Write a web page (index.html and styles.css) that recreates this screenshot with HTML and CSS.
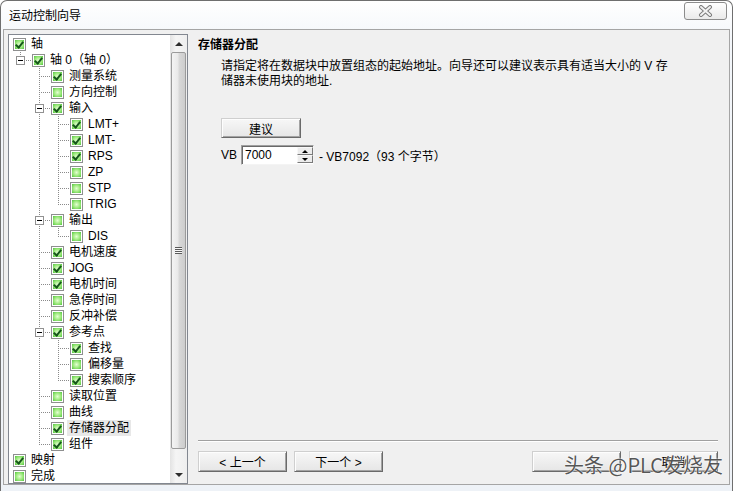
FILE: index.html
```html
<!DOCTYPE html>
<html lang="zh-CN">
<head>
<meta charset="UTF-8">
<title>运动控制向导</title>
<link rel="stylesheet" href="styles.css">
</head>
<body>
<div class="window">
	<div class="titlebar">
		<span class="title">运动控制向导</span>
		<button class="close" type="button">
			<svg width="15" height="12" viewBox="0 0 15 12">
				<path d="M3 2 L12 10 M12 2 L3 10" stroke="#7b7b7b" stroke-width="4" stroke-linecap="round" fill="none"/>
				<path d="M3 2 L12 10 M12 2 L3 10" stroke="#f2f2f2" stroke-width="2" stroke-linecap="round" fill="none"/>
			</svg>
		</button>
	</div>
	<div class="client">
		<div class="tree">
			<ul class="nodes">
				<li class="row"><span class="cb on"></span><span class="lbl">轴</span></li>
				<li class="row"><span class="ind l"><span class="x"></span></span><span class="cb on"></span><span class="lbl">轴 0（轴 0）</span></li>
				<li class="row"><span class="ind"></span><span class="ind t"></span><span class="cb on"></span><span class="lbl">测量系统</span></li>
				<li class="row"><span class="ind"></span><span class="ind t"></span><span class="cb"></span><span class="lbl">方向控制</span></li>
				<li class="row"><span class="ind"></span><span class="ind t"><span class="x"></span></span><span class="cb on"></span><span class="lbl">输入</span></li>
				<li class="row"><span class="ind"></span><span class="ind v"></span><span class="ind t"></span><span class="cb on"></span><span class="lbl">LMT+</span></li>
				<li class="row"><span class="ind"></span><span class="ind v"></span><span class="ind t"></span><span class="cb on"></span><span class="lbl">LMT-</span></li>
				<li class="row"><span class="ind"></span><span class="ind v"></span><span class="ind t"></span><span class="cb on"></span><span class="lbl">RPS</span></li>
				<li class="row"><span class="ind"></span><span class="ind v"></span><span class="ind t"></span><span class="cb"></span><span class="lbl">ZP</span></li>
				<li class="row"><span class="ind"></span><span class="ind v"></span><span class="ind t"></span><span class="cb"></span><span class="lbl">STP</span></li>
				<li class="row"><span class="ind"></span><span class="ind v"></span><span class="ind l"></span><span class="cb"></span><span class="lbl">TRIG</span></li>
				<li class="row"><span class="ind"></span><span class="ind t"><span class="x"></span></span><span class="cb"></span><span class="lbl">输出</span></li>
				<li class="row"><span class="ind"></span><span class="ind v"></span><span class="ind l"></span><span class="cb"></span><span class="lbl">DIS</span></li>
				<li class="row"><span class="ind"></span><span class="ind t"></span><span class="cb on"></span><span class="lbl">电机速度</span></li>
				<li class="row"><span class="ind"></span><span class="ind t"></span><span class="cb on"></span><span class="lbl">JOG</span></li>
				<li class="row"><span class="ind"></span><span class="ind t"></span><span class="cb on"></span><span class="lbl">电机时间</span></li>
				<li class="row"><span class="ind"></span><span class="ind t"></span><span class="cb"></span><span class="lbl">急停时间</span></li>
				<li class="row"><span class="ind"></span><span class="ind t"></span><span class="cb"></span><span class="lbl">反冲补偿</span></li>
				<li class="row"><span class="ind"></span><span class="ind t"><span class="x"></span></span><span class="cb on"></span><span class="lbl">参考点</span></li>
				<li class="row"><span class="ind"></span><span class="ind v"></span><span class="ind t"></span><span class="cb on"></span><span class="lbl">查找</span></li>
				<li class="row"><span class="ind"></span><span class="ind v"></span><span class="ind t"></span><span class="cb"></span><span class="lbl">偏移量</span></li>
				<li class="row"><span class="ind"></span><span class="ind v"></span><span class="ind l"></span><span class="cb on"></span><span class="lbl">搜索顺序</span></li>
				<li class="row"><span class="ind"></span><span class="ind t"></span><span class="cb"></span><span class="lbl">读取位置</span></li>
				<li class="row"><span class="ind"></span><span class="ind t"></span><span class="cb"></span><span class="lbl">曲线</span></li>
				<li class="row"><span class="ind"></span><span class="ind t"></span><span class="cb on"></span><span class="lbl sel">存储器分配</span></li>
				<li class="row"><span class="ind"></span><span class="ind l"></span><span class="cb on"></span><span class="lbl">组件</span></li>
				<li class="row"><span class="cb on"></span><span class="lbl">映射</span></li>
				<li class="row"><span class="cb"></span><span class="lbl">完成</span></li>
			</ul>
			<div class="sbar">
				<div class="sb-btn up"></div>
				<div class="sb-thumb"><span class="grip"></span></div>
				<div class="sb-track"></div>
				<div class="sb-btn down"></div>
			</div>
		</div>
		<div class="page">
			<h2>存储器分配</h2>
			<p class="desc">请指定将在数据块中放置组态的起始地址。向导还可以建议表示具有适当大小的 V 存<br>储器未使用块的地址.</p>
			<button class="btn suggest" type="button">建议</button>
			<div class="vbrow">
				<span>VB</span>
				<div class="spinbox">
					<span class="val">7000</span>
					<span class="spin"><i class="up"></i><i class="down"></i></span>
				</div>
				<span>- VB7092（93 个字节）</span>
			</div>
			<div class="footer">
				<div class="sep"></div>
				<div class="buttons">
					<button class="btn nav" type="button">&lt; 上一个</button>
					<button class="btn nav next" type="button">下一个 &gt;</button>
					<button class="btn nav finish" type="button"></button>
					<button class="btn nav cancel" type="button">取消</button>
				</div>
			</div>
		</div>
	</div>
</div>
<div class="watermark">头条 @PLC发烧友</div>
</body>
</html>
```

FILE: styles.css
```css
body {
	margin: 0;
	background: #fff;
	font-family: "Liberation Sans", "Noto Sans CJK SC", sans-serif;
	font-size: 12px;
	color: #000;
	position: relative;
	overflow: hidden;
	height: 491px;
}

.window {
	width: 733px;
	height: 491px;
	box-sizing: border-box;
	border: 1px solid #6f6f6f;
	border-bottom: none;
	border-radius: 7px 7px 0 0;
	background: linear-gradient(#ffffff, #f3f6fa 40px, #eef2f7);
	padding: 0 2px 6px 2px;
	display: flex;
	flex-direction: column;
}

.titlebar {
	height: 28px;
	display: flex;
	align-items: flex-start;
	padding-left: 6px;
}

.title {
	line-height: 28px;
	font-family: "Noto Sans CJK SC", sans-serif;
	font-size: 12px;
}

.close {
	margin: 1px 3px 0 auto;
	width: 43px;
	height: 18px;
	padding: 0;
	border: 1px solid #8c8c8c;
	border-radius: 3px;
	background: linear-gradient(#ffffff, #eaeaea);
	display: flex;
	align-items: center;
	justify-content: center;
}

.client {
	flex: 1;
	display: flex;
	border: 1px solid #a5a5a5;
	background: #f0f0f0;
	padding: 4px 0 0 4px;
	min-height: 0;
}

/* tree */

.tree {
	width: 180px;
	height: 450px;
	box-sizing: border-box;
	border: 1px solid #828790;
	background: #fff;
	display: flex;
	flex: none;
}

.nodes {
	flex: 1;
	list-style: none;
	margin: 0;
	padding: 1px 0 0 0;
	overflow: hidden;
}

.row {
	display: flex;
	align-items: center;
	height: 16px;
	padding-left: 4px;
	white-space: nowrap;
}

.ind {
	width: 19px;
	height: 16px;
	flex: none;
	position: relative;
}

.ind.v::before,
.ind.t::before,
.ind.l::before {
	content: "";
	position: absolute;
	left: 7px;
	top: 0;
	width: 1px;
	height: 16px;
	background: repeating-linear-gradient(to bottom, #8a8a8a 0 1px, transparent 1px 2px);
}

.ind.l::before {
	height: 9px;
}

.ind.t::after,
.ind.l::after {
	content: "";
	position: absolute;
	left: 9px;
	top: 8px;
	width: 10px;
	height: 1px;
	background: repeating-linear-gradient(to right, #8a8a8a 0 1px, transparent 1px 2px);
}

.x {
	position: absolute;
	left: 3px;
	top: 4px;
	width: 9px;
	height: 9px;
	box-sizing: border-box;
	border: 1px solid #919191;
	background: #fff;
	z-index: 1;
}

.x::after {
	content: "";
	position: absolute;
	left: 1px;
	top: 3px;
	width: 5px;
	height: 1px;
	background: #000;
}

.cb {
	width: 13px;
	height: 13px;
	flex: none;
	box-sizing: border-box;
	border: 1px solid #8e8f8f;
	position: relative;
	background: radial-gradient(circle, #e4ffd2 0, #9ae87a 45%, #4cbf3c 85%, #2f9a2f 100%);
	box-shadow: inset 0 0 0 1px #fff;
}

.cb.on::after {
	content: "";
	position: absolute;
	left: 3px;
	top: 1px;
	width: 3px;
	height: 6px;
	border: solid #16571a;
	border-width: 0 2px 2px 0;
	transform: rotate(40deg);
}

.lbl {
	margin-left: 3px;
	padding: 0 2px;
	line-height: 16px;
}

.lbl.sel {
	background: #e8e8e8;
}

/* scrollbar */

.sbar {
	width: 17px;
	flex: none;
	display: flex;
	flex-direction: column;
	background: linear-gradient(to right, #e3e3e3, #f5f5f5 35%, #eeeeee);
}

.sb-btn {
	height: 17px;
	display: flex;
	align-items: center;
	justify-content: center;
}

.sb-btn::after {
	content: "";
	width: 0;
	height: 0;
	border-left: 4px solid transparent;
	border-right: 4px solid transparent;
}

.sb-btn.up::after {
	border-bottom: 4px solid #2e2e2e;
}

.sb-btn.down::after {
	border-top: 4px solid #2e2e2e;
}

.sb-thumb {
	height: 397px;
	margin: 0 1px;
	box-sizing: border-box;
	border: 1px solid #9b9b9b;
	border-radius: 2px;
	background: linear-gradient(to right, #f4f4f4, #e9e9e9 45%, #d8d8d8 55%, #cdcdcd);
	display: flex;
	align-items: center;
	justify-content: center;
}

.grip {
	width: 7px;
	height: 7px;
	background: repeating-linear-gradient(to bottom, #5a5a5a 0 1px, #f8f8f8 1px 2px);
}

.sb-track {
	flex: 1;
}

/* page */

.page {
	flex: 1;
	display: flex;
	flex-direction: column;
	align-items: flex-start;
	padding: 2px 11px 12px 10px;
}

h2 {
	margin: 0;
	font-size: 12px;
	font-weight: bold;
	line-height: 16px;
	font-family: "Noto Sans CJK SC", sans-serif;
}

.desc {
	margin: 7px 0 0;
	padding-left: 23px;
	line-height: 15px;
	white-space: nowrap;
}

.btn {
	box-sizing: border-box;
	padding: 0;
	border: 1px solid;
	border-color: #cfcfcf #6a6a6a #6a6a6a #cfcfcf;
	box-shadow: inset 1px 1px #fdfdfd, inset -1px -1px #a3a3a3;
	background: linear-gradient(#f7f7f7, #e6e6e6);
	font-family: "Liberation Sans", "Noto Sans CJK SC", sans-serif;
	font-size: 12px;
	color: #000;
}

.suggest {
	margin: 29px 0 0 23px;
	width: 80px;
	height: 20px;
}

.vbrow {
	margin: 7px 0 0 23px;
	height: 20px;
	display: flex;
	align-items: center;
	gap: 4px;
}

.spinbox {
	width: 73px;
	height: 20px;
	box-sizing: border-box;
	border: 1px solid;
	border-color: #a0a0a0 #f4f4f4 #f4f4f4 #a0a0a0;
	box-shadow: inset 1px 1px #696969;
	background: #fff;
	display: flex;
	margin-right: 1px;
}

.val {
	flex: 1;
	padding: 1px 0 0 3px;
	line-height: 17px;
}

.spin {
	width: 16px;
	display: flex;
	flex-direction: column;
	padding: 1px 0 1px 0;
	box-sizing: border-box;
}

.spin i {
	flex: 1;
	box-sizing: border-box;
	border: 1px solid;
	border-color: #f8f8f8 #7a7a7a #7a7a7a #f8f8f8;
	background: #ececec;
	display: flex;
	align-items: center;
	justify-content: center;
}

.spin i::after {
	content: "";
	border-left: 3px solid transparent;
	border-right: 3px solid transparent;
}

.spin .up::after {
	border-bottom: 3px solid #000;
}

.spin .down::after {
	border-top: 3px solid #000;
}

.footer {
	align-self: stretch;
	margin-top: auto;
}

.sep {
	border-top: 1px solid #a0a0a0;
	border-bottom: 1px solid #fff;
}

.buttons {
	display: flex;
	margin-top: 9px;
}

.nav {
	width: 89px;
	height: 21px;
}

.next {
	margin-left: 7px;
}

.finish {
	margin-left: auto;
}

.cancel {
	margin-left: 8px;
}

.watermark {
	position: absolute;
	left: 564px;
	top: 453px;
	line-height: 24px;
	font-family: "Noto Sans CJK SC", sans-serif;
	font-size: 20px;
	color: rgba(55, 55, 55, 0.85);
	text-shadow: 0 0 2px #fff, 0 0 1px #fff;
	white-space: nowrap;
}
```
